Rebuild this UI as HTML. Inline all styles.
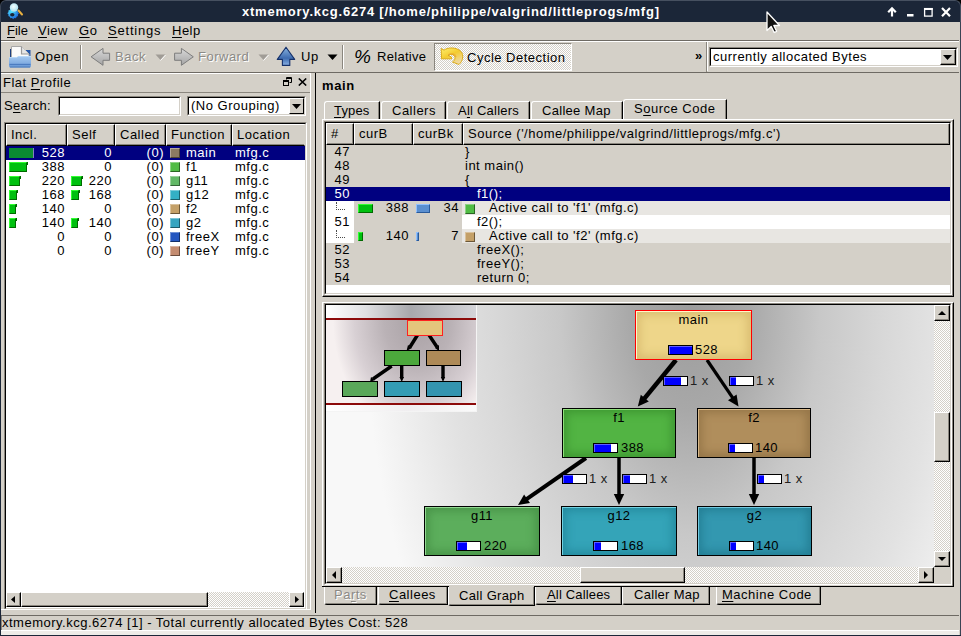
<!DOCTYPE html>
<html><head><meta charset="utf-8">
<style>
*{box-sizing:border-box}
html,body{margin:0;padding:0}
body{width:961px;height:636px;overflow:hidden;position:relative;background:#d4d0c8;font-family:"Liberation Sans",sans-serif;font-size:13px;letter-spacing:0.5px;color:#000}
.a{position:absolute}
.t{position:absolute;white-space:pre;line-height:14px}
.u{text-decoration:underline;text-underline-offset:2px}
.hl{position:absolute;height:1px}
.vl{position:absolute;width:1px}
</style></head><body>

<!-- ===== TITLE BAR ===== -->
<div class="a" style="left:0;top:0;width:961px;height:8px;background:#000"></div>
<div class="a" style="left:0;top:0;width:961px;height:22px;background:#1b2638;border-radius:6px 6px 0 0;border-top:1px solid #465060;border-left:1px solid #3a4454;border-right:1px solid #465060"></div>
<div class="t" style="left:242px;top:3px;color:#fff;font-weight:bold;font-size:13px;letter-spacing:0.78px;line-height:18px">xtmemory.kcg.6274 [/home/philippe/valgrind/littleprogs/mfg]</div>

<svg class="a" style="left:4px;top:1px" width="20" height="20" viewBox="0 0 20 20">
 <defs><radialGradient id="gear" cx="0.35" cy="0.35" r="0.75"><stop offset="0" stop-color="#50e8ff"/><stop offset="1" stop-color="#1458d8"/></radialGradient>
 <radialGradient id="lens" cx="0.45" cy="0.4" r="0.6"><stop offset="0" stop-color="#f4ffff"/><stop offset="1" stop-color="#a8e0f0"/></radialGradient></defs>
 <g transform="translate(0.3 2.2)">
 <path d="M7.7 5.5 l1.2 -1.2 1.2 1.2 1.6 -.3 .6 1.5 1.5 .6 -.2 1.6 1.2 1.2 -1.2 1.2 .2 1.6 -1.5 .6 -.6 1.5 -1.6 -.2 -1.2 1.2 -1.2 -1.2 -1.6 .2 -.6 -1.5 -1.5 -.6 .2 -1.6 -1.2 -1.2 1.2 -1.2 -.2 -1.6 1.5 -.6 .6 -1.5 z" fill="url(#gear)"/>
 <ellipse cx="8" cy="11.5" rx="2.2" ry="1.8" fill="#1b2638"/>
 </g>
 <path d="M14.5 9.5 L18 13.5" stroke="#e8b040" stroke-width="2" stroke-linecap="round"/>
 <circle cx="10" cy="6.5" r="4.2" fill="url(#lens)"/>
</svg>
<svg class="a" style="left:885px;top:5px" width="70" height="14" viewBox="0 0 70 14">
 <path d="M7 11.5 V4" stroke="#fff" stroke-width="2.2"/>
 <path d="M3.2 7.3 L7 3.3 L10.8 7.3" stroke="#fff" stroke-width="2.2" fill="none" stroke-linejoin="miter"/>
 <rect x="22" y="9" width="6.5" height="2.5" fill="#fff"/>
 <rect x="39.6" y="3.6" width="7.5" height="7.5" fill="none" stroke="#fff" stroke-width="1.3"/>
 <rect x="39" y="3" width="8.7" height="2" fill="#fff"/>
 <path d="M57 3 L65 11.2 M65 3 L57 11.2" stroke="#fff" stroke-width="2.2"/>
</svg>
<!-- frame borders -->
<div class="a" style="left:0;top:22px;width:1px;height:614px;background:#1b2638"></div>
<div class="a" style="left:960px;top:22px;width:1px;height:614px;background:#3a4454"></div>
<div class="a" style="left:0;top:635px;width:961px;height:1px;background:#1b2638"></div>

<!-- ===== MENU BAR ===== -->
<div class="t" style="left:7px;top:24px;letter-spacing:0"><span class="u">F</span>ile</div>
<div class="t" style="left:38px;top:24px"><span class="u">V</span>iew</div>
<div class="t" style="left:79px;top:24px"><span class="u">G</span>o</div>
<div class="t" style="left:108px;top:24px;letter-spacing:0.8px"><span class="u">S</span>ettings</div>
<div class="t" style="left:172px;top:24px"><span class="u">H</span>elp</div>
<div class="hl" style="left:1px;top:40px;width:958px;background:#6e6a64"></div>
<div class="hl" style="left:1px;top:41px;width:958px;background:#fff"></div>

<!-- ===== TOOLBAR ===== -->

<!-- Open icon -->
<svg class="a" style="left:8px;top:45px" width="24" height="23" viewBox="0 0 24 23">
 <defs><linearGradient id="gf" x1="0" y1="0" x2="0" y2="1"><stop offset="0" stop-color="#a4c8f0"/><stop offset="1" stop-color="#6c9cd8"/></linearGradient></defs>
 <path d="M2 4 H6 V12 H2 Z" fill="#1c3f80"/>
 <path d="M17 5 L22.5 5 V12 H17 Z" fill="#2858a8"/>
 <path d="M3.5 1.5 H13.5 L21 9 V12.5 H3.5 Z" fill="#fbfbfb" stroke="#a8a8a8" stroke-width="1"/>
 <path d="M13.5 1.5 V9 H21" fill="#e6e6e6" stroke="#9a9a9a" stroke-width="1.2"/>
 <path d="M1 12.5 H9 L10 11.5 H23 V21 Q23 22.5 21.5 22.5 H2.5 Q1 22.5 1 21 Z" fill="url(#gf)"/>
 <path d="M1 12.5 H9 L10 11.5 H23" stroke="#b8d8f8" stroke-width="1" fill="none"/>
 <path d="M1.5 19.5 H22.5" stroke="#4c7cc0" stroke-width="1.3"/>
 <path d="M2 22 H22" stroke="#4a78b8" stroke-width="1"/>
</svg>
<div class="t" style="left:35px;top:50px;letter-spacing:0.6px">Open</div>
<div class="vl" style="left:80px;top:45px;height:24px;background:#8a867e"></div>
<div class="vl" style="left:81px;top:45px;height:24px;background:#fff"></div>
<!-- Back -->
<svg class="a" style="left:90px;top:47px" width="21" height="19" viewBox="0 0 21 19">
 <defs><linearGradient id="gb" x1="0" y1="0" x2="0" y2="1"><stop offset="0" stop-color="#d8d8d8"/><stop offset="1" stop-color="#a4a4a4"/></linearGradient></defs>
 <path d="M1.1 9.8 L13 1.4 V6.2 H19.6 V13.3 H13 V18.3 Z" fill="url(#gb)" stroke="#7c7c7c" stroke-width="1" stroke-linejoin="round"/>
</svg>
<div class="t" style="left:115px;top:50px;color:#8c8a86;text-shadow:1px 1px 0 #fff">Back</div>
<svg class="a" style="left:155px;top:54px" width="11" height="7"><path d="M0.5 0.5 H10.5 L5.5 6 Z" fill="#a09c96"/><path d="M10.5 1 L5.5 6.5" stroke="#fff" stroke-width="1"/></svg>
<!-- Forward -->
<svg class="a" style="left:173px;top:47px" width="21" height="19" viewBox="0 0 21 19">
 <path d="M20.3 9.8 L8.4 1.4 V6.2 H1.6 V13.3 H8.4 V18.3 Z" fill="url(#gb)" stroke="#7c7c7c" stroke-width="1" stroke-linejoin="round"/>
</svg>
<div class="t" style="left:198px;top:50px;color:#8c8a86;text-shadow:1px 1px 0 #fff">Forward</div>
<svg class="a" style="left:258px;top:54px" width="11" height="7"><path d="M0.5 0.5 H10.5 L5.5 6 Z" fill="#a09c96"/><path d="M10.5 1 L5.5 6.5" stroke="#fff" stroke-width="1"/></svg>
<!-- Up -->
<svg class="a" style="left:276px;top:46px" width="20" height="21" viewBox="0 0 20 21">
 <defs><linearGradient id="gu" x1="0" y1="0" x2="0" y2="1"><stop offset="0" stop-color="#8ab4e0"/><stop offset="0.6" stop-color="#3e6cb0"/><stop offset="1" stop-color="#88b0e4"/></linearGradient></defs>
 <path d="M10 1.2 L18.7 13.4 H13.8 V19.4 H6.4 V13.4 H1.3 Z" fill="url(#gu)" stroke="#14306a" stroke-width="1.1" stroke-linejoin="round"/>
</svg>
<div class="t" style="left:301px;top:50px">Up</div>
<svg class="a" style="left:327px;top:54px" width="11" height="7"><path d="M0.5 0.5 H10.5 L5.5 6 Z" fill="#000"/></svg>
<div class="vl" style="left:342px;top:45px;height:24px;background:#8a867e"></div>
<div class="vl" style="left:343px;top:45px;height:24px;background:#fff"></div>
<!-- Relative -->
<div class="t" style="left:354px;top:47px;font-size:19px;line-height:20px;font-style:italic;letter-spacing:0">%</div>
<div class="t" style="left:377px;top:50px;letter-spacing:0.29px">Relative</div>
<!-- Cycle detection pressed -->
<div class="a" style="left:434px;top:43px;width:138px;height:28px;border:1px solid;border-color:#8a867e #fff #fff #8a867e;background-color:#eceae6;background-image:repeating-conic-gradient(#d4d0c8 0 25%, #ffffff 0 50%);background-size:2px 2px"></div>
<svg class="a" style="left:436px;top:42px" width="32" height="28" viewBox="0 0 32 28">
 <defs><linearGradient id="gy" x1="0" y1="0" x2="0.6" y2="1"><stop offset="0" stop-color="#fff070"/><stop offset="0.5" stop-color="#f4cc30"/><stop offset="1" stop-color="#f0d8a0"/></linearGradient></defs>
 <path d="M5.2 6.5 L8 8.2 C11 5.5 20 4.5 25 9.5 C28 13 27 19 23 22.5 L16.5 20 C19.5 18 20 14.5 17 12.8 C15.5 12 13.5 12.5 12 13.3 L15.5 15 V16.8 H5.5 Z" fill="url(#gy)" stroke="#dcac18" stroke-width="1" stroke-linejoin="round"/>
 <path d="M12.5 12.8 C15 11 19 11.5 20 15" stroke="#e8a030" stroke-width="1.2" fill="none" opacity="0.7"/>
</svg>
<div class="t" style="left:467px;top:51px">Cycle Detection</div>
<!-- chevrons + combo -->
<div class="t" style="left:695px;top:49px;font-weight:bold;letter-spacing:-1px">»</div>
<div class="vl" style="left:706px;top:42px;height:30px;background:#8a867e"></div>
<div class="vl" style="left:707px;top:42px;height:29px;background:#fff"></div>
<div class="a" style="left:709px;top:47px;width:249px;height:20px;border:1px solid;border-color:#8a867e #fff #fff #8a867e;background:#fff"></div>
<div class="a" style="left:710px;top:48px;width:247px;height:18px;border-top:1px solid #000;border-left:1px solid #000;border-right:1px solid #d4d0c8;border-bottom:1px solid #d4d0c8"></div>
<div class="t" style="left:713px;top:50px">currently allocated Bytes</div>
<div class="a" style="left:940px;top:49px;width:16px;height:16px;background:#d4d0c8;border:1px solid;border-color:#fff #000 #000 #fff;box-shadow:inset -1px -1px 0 #8a867e"></div>
<svg class="a" style="left:943px;top:55px" width="9" height="5"><path d="M0 0 H9 L4.5 5 Z" fill="#000"/></svg>

<div class="hl" style="left:1px;top:72px;width:958px;background:#6e6a64"></div>

<!-- ===== LEFT DOCK ===== -->
<div class="hl" style="left:1px;top:73px;width:310px;background:#fff"></div>
<div class="vl" style="left:310px;top:73px;height:537px;background:#fff"></div>
<div class="t" style="left:3px;top:76px">Flat <span class="u">P</span>rofile</div>
<svg class="a" style="left:283px;top:77px" width="9" height="9" viewBox="0 0 9 9"><path d="M3.5 0.5 H8.5 V5.5 H6.5 M3.5 2.5 V0.5" fill="none" stroke="#000"/><path d="M3.5 1.5 H8.5" stroke="#000"/><rect x="0.5" y="3.5" width="5" height="5" fill="none" stroke="#000"/><path d="M0.5 4.5 H5.5" stroke="#000"/></svg>
<svg class="a" style="left:298px;top:78px" width="9" height="8" viewBox="0 0 9 8"><path d="M0.8 0.5 L8.2 7.5 M8.2 0.5 L0.8 7.5" stroke="#000" stroke-width="1.6"/></svg>
<div class="hl" style="left:1px;top:92px;width:309px;background:#8a867e"></div>
<div class="t" style="left:4px;top:99px;letter-spacing:0.3px">S<span class="u">e</span>arch:</div>
<div class="a" style="left:58px;top:96px;width:123px;height:20px;border:1px solid;border-color:#8a867e #fff #fff #8a867e;background:#fff"><div style="position:absolute;left:0;top:0;right:0;bottom:0;border:1px solid;border-color:#000 #d4d0c8 #d4d0c8 #000"></div></div>
<div class="a" style="left:187px;top:96px;width:119px;height:20px;border:1px solid;border-color:#8a867e #fff #fff #8a867e;background:#fff"><div style="position:absolute;left:0;top:0;right:0;bottom:0;border:1px solid;border-color:#000 #d4d0c8 #d4d0c8 #000"></div></div>
<div class="t" style="left:191px;top:99px">(No Grouping)</div>
<div class="a" style="left:289px;top:98px;width:15px;height:16px;background:#d4d0c8;border:1px solid;border-color:#fff #000 #000 #fff"></div>
<svg class="a" style="left:292px;top:104px" width="9" height="5"><path d="M0 0 H9 L4.5 5 Z" fill="#000"/></svg>
<div class="a" style="left:4px;top:122px;width:303px;height:488px;border:1px solid;border-color:#8a867e #fff #fff #8a867e"></div>
<div class="a" style="left:5px;top:123px;width:301px;height:486px;border:1px solid;border-color:#000 #d4d0c8 #d4d0c8 #000;background:#fff"></div>
<div class="a" style="left:6px;top:124px;width:61px;height:22px;background:#d4d0c8;border:1px solid;border-color:#fff #000 #000 #fff;box-shadow:inset -1px -1px 0 #8a867e"></div>
<div class="t" style="left:11px;top:128px">Incl.</div>
<div class="a" style="left:67px;top:124px;width:48px;height:22px;background:#d4d0c8;border:1px solid;border-color:#fff #000 #000 #fff;box-shadow:inset -1px -1px 0 #8a867e"></div>
<div class="t" style="left:72px;top:128px">Self</div>
<div class="a" style="left:115px;top:124px;width:51px;height:22px;background:#d4d0c8;border:1px solid;border-color:#fff #000 #000 #fff;box-shadow:inset -1px -1px 0 #8a867e"></div>
<div class="t" style="left:120px;top:128px">Called</div>
<div class="a" style="left:166px;top:124px;width:66px;height:22px;background:#d4d0c8;border:1px solid;border-color:#fff #000 #000 #fff;box-shadow:inset -1px -1px 0 #8a867e"></div>
<div class="t" style="left:171px;top:128px">Function</div>
<div class="a" style="left:232px;top:124px;width:73px;height:22px;background:#d4d0c8;border:1px solid;border-color:#fff #d4d0c8 #000 #fff;box-shadow:inset 0 -1px 0 #8a867e"></div>
<div class="t" style="left:237px;top:128px">Location</div>
<div class="a" style="left:6px;top:146px;width:299px;height:14px;background:#000080"></div>
<div class="a" style="left:9px;top:148px;width:25px;height:10px;background:#0a8a32;border-right:1px solid #8080c0"></div>
<div class="t" style="left:6px;top:146px;width:59px;text-align:right;color:#fff">528</div>
<div class="t" style="left:67px;top:146px;width:45px;text-align:right;color:#fff">0</div>
<div class="t" style="left:115px;top:146px;width:49px;text-align:right;color:#fff">(0)</div>
<div class="a" style="left:170px;top:148px;width:10px;height:10px;background:#8b7b62;border:1px solid;border-color:rgba(255,255,255,.35) rgba(0,0,0,.45) rgba(0,0,0,.45) rgba(255,255,255,.35)"></div>
<div class="t" style="left:186px;top:146px;color:#fff">main</div>
<div class="t" style="left:235px;top:146px;color:#fff">mfg.c</div>
<div class="a" style="left:9px;top:162px;width:18px;height:10px;background:#00c010;border:1px solid;border-color:#30ff30 #006a00 #006a00 #30ff30"></div><div class="a" style="left:27px;top:162px;width:1px;height:3px;background:#006a00"></div>
<div class="t" style="left:6px;top:160px;width:59px;text-align:right;color:#000">388</div>
<div class="t" style="left:67px;top:160px;width:45px;text-align:right;color:#000">0</div>
<div class="t" style="left:115px;top:160px;width:49px;text-align:right;color:#000">(0)</div>
<div class="a" style="left:170px;top:162px;width:10px;height:10px;background:#50bc44;border:1px solid;border-color:rgba(255,255,255,.35) rgba(0,0,0,.45) rgba(0,0,0,.45) rgba(255,255,255,.35)"></div>
<div class="t" style="left:186px;top:160px;color:#000">f1</div>
<div class="t" style="left:235px;top:160px;color:#000">mfg.c</div>
<div class="a" style="left:9px;top:176px;width:11px;height:10px;background:#00c010;border:1px solid;border-color:#30ff30 #006a00 #006a00 #30ff30"></div><div class="a" style="left:20px;top:176px;width:1px;height:3px;background:#006a00"></div>
<div class="a" style="left:71px;top:176px;width:11px;height:10px;background:#00c010;border:1px solid;border-color:#30ff30 #006a00 #006a00 #30ff30"></div><div class="a" style="left:82px;top:176px;width:1px;height:3px;background:#006a00"></div>
<div class="t" style="left:6px;top:174px;width:59px;text-align:right;color:#000">220</div>
<div class="t" style="left:67px;top:174px;width:45px;text-align:right;color:#000">220</div>
<div class="t" style="left:115px;top:174px;width:49px;text-align:right;color:#000">(0)</div>
<div class="a" style="left:170px;top:176px;width:10px;height:10px;background:#62b866;border:1px solid;border-color:rgba(255,255,255,.35) rgba(0,0,0,.45) rgba(0,0,0,.45) rgba(255,255,255,.35)"></div>
<div class="t" style="left:186px;top:174px;color:#000">g11</div>
<div class="t" style="left:235px;top:174px;color:#000">mfg.c</div>
<div class="a" style="left:9px;top:190px;width:8px;height:10px;background:#00c010;border:1px solid;border-color:#30ff30 #006a00 #006a00 #30ff30"></div><div class="a" style="left:17px;top:190px;width:1px;height:3px;background:#006a00"></div>
<div class="a" style="left:71px;top:190px;width:8px;height:10px;background:#00c010;border:1px solid;border-color:#30ff30 #006a00 #006a00 #30ff30"></div><div class="a" style="left:79px;top:190px;width:1px;height:3px;background:#006a00"></div>
<div class="t" style="left:6px;top:188px;width:59px;text-align:right;color:#000">168</div>
<div class="t" style="left:67px;top:188px;width:45px;text-align:right;color:#000">168</div>
<div class="t" style="left:115px;top:188px;width:49px;text-align:right;color:#000">(0)</div>
<div class="a" style="left:170px;top:190px;width:10px;height:10px;background:#34b0c4;border:1px solid;border-color:rgba(255,255,255,.35) rgba(0,0,0,.45) rgba(0,0,0,.45) rgba(255,255,255,.35)"></div>
<div class="t" style="left:186px;top:188px;color:#000">g12</div>
<div class="t" style="left:235px;top:188px;color:#000">mfg.c</div>
<div class="a" style="left:9px;top:204px;width:7px;height:10px;background:#00c010;border:1px solid;border-color:#30ff30 #006a00 #006a00 #30ff30"></div><div class="a" style="left:16px;top:204px;width:1px;height:3px;background:#006a00"></div>
<div class="t" style="left:6px;top:202px;width:59px;text-align:right;color:#000">140</div>
<div class="t" style="left:67px;top:202px;width:45px;text-align:right;color:#000">0</div>
<div class="t" style="left:115px;top:202px;width:49px;text-align:right;color:#000">(0)</div>
<div class="a" style="left:170px;top:204px;width:10px;height:10px;background:#c4a068;border:1px solid;border-color:rgba(255,255,255,.35) rgba(0,0,0,.45) rgba(0,0,0,.45) rgba(255,255,255,.35)"></div>
<div class="t" style="left:186px;top:202px;color:#000">f2</div>
<div class="t" style="left:235px;top:202px;color:#000">mfg.c</div>
<div class="a" style="left:9px;top:218px;width:7px;height:10px;background:#00c010;border:1px solid;border-color:#30ff30 #006a00 #006a00 #30ff30"></div><div class="a" style="left:16px;top:218px;width:1px;height:3px;background:#006a00"></div>
<div class="a" style="left:71px;top:218px;width:7px;height:10px;background:#00c010;border:1px solid;border-color:#30ff30 #006a00 #006a00 #30ff30"></div><div class="a" style="left:78px;top:218px;width:1px;height:3px;background:#006a00"></div>
<div class="t" style="left:6px;top:216px;width:59px;text-align:right;color:#000">140</div>
<div class="t" style="left:67px;top:216px;width:45px;text-align:right;color:#000">140</div>
<div class="t" style="left:115px;top:216px;width:49px;text-align:right;color:#000">(0)</div>
<div class="a" style="left:170px;top:218px;width:10px;height:10px;background:#36a4c0;border:1px solid;border-color:rgba(255,255,255,.35) rgba(0,0,0,.45) rgba(0,0,0,.45) rgba(255,255,255,.35)"></div>
<div class="t" style="left:186px;top:216px;color:#000">g2</div>
<div class="t" style="left:235px;top:216px;color:#000">mfg.c</div>
<div class="t" style="left:6px;top:230px;width:59px;text-align:right;color:#000">0</div>
<div class="t" style="left:67px;top:230px;width:45px;text-align:right;color:#000">0</div>
<div class="t" style="left:115px;top:230px;width:49px;text-align:right;color:#000">(0)</div>
<div class="a" style="left:170px;top:232px;width:10px;height:10px;background:#2456c0;border:1px solid;border-color:rgba(255,255,255,.35) rgba(0,0,0,.45) rgba(0,0,0,.45) rgba(255,255,255,.35)"></div>
<div class="t" style="left:186px;top:230px;color:#000">freeX</div>
<div class="t" style="left:235px;top:230px;color:#000">mfg.c</div>
<div class="t" style="left:6px;top:244px;width:59px;text-align:right;color:#000">0</div>
<div class="t" style="left:67px;top:244px;width:45px;text-align:right;color:#000">0</div>
<div class="t" style="left:115px;top:244px;width:49px;text-align:right;color:#000">(0)</div>
<div class="a" style="left:170px;top:246px;width:10px;height:10px;background:#c48c70;border:1px solid;border-color:rgba(255,255,255,.35) rgba(0,0,0,.45) rgba(0,0,0,.45) rgba(255,255,255,.35)"></div>
<div class="t" style="left:186px;top:244px;color:#000">freeY</div>
<div class="t" style="left:235px;top:244px;color:#000">mfg.c</div>
<div class="a" style="left:6px;top:592px;width:298px;height:15px;background-color:#eae8e4;background-image:repeating-conic-gradient(#d4d0c8 0 25%, #ffffff 0 50%);background-size:2px 2px"></div>
<div class="a" style="left:6px;top:592px;width:15px;height:15px;background:#d4d0c8;border:1px solid;border-color:#fff #000 #000 #fff;box-shadow:inset -1px -1px 0 #8a867e"></div>
<svg class="a" style="left:11px;top:596px" width="4" height="7"><path d="M4 0 V7 L0 3.5 Z" fill="#000"/></svg>
<div class="a" style="left:21px;top:592px;width:187px;height:15px;background:#d4d0c8;border:1px solid;border-color:#fff #000 #000 #fff;box-shadow:inset -1px -1px 0 #8a867e"></div>
<div class="a" style="left:289px;top:592px;width:15px;height:15px;background:#d4d0c8;border:1px solid;border-color:#fff #000 #000 #fff;box-shadow:inset -1px -1px 0 #8a867e"></div>
<svg class="a" style="left:295px;top:596px" width="4" height="7"><path d="M0 0 V7 L4 3.5 Z" fill="#000"/></svg>
<div class="hl" style="left:1px;top:609px;width:310px;background:#fff"></div>
<div class="vl" style="left:315px;top:73px;height:540px;background:#000"></div>

<!-- ===== RIGHT PANEL ===== -->
<div class="t" style="left:322px;top:79px;font-weight:bold;letter-spacing:0.6px">main</div>
<div class="a" style="left:324px;top:101px;width:56px;height:19px;background:#d4d0c8;border-left:1px solid #fff;border-top:1px solid #fff;border-right:1px solid #000;border-top-left-radius:3px;box-shadow:inset -1px 0 0 #8a867e"></div>
<div class="a" style="left:381px;top:101px;width:65px;height:19px;background:#d4d0c8;border-left:1px solid #fff;border-top:1px solid #fff;border-right:1px solid #000;border-top-left-radius:3px;box-shadow:inset -1px 0 0 #8a867e"></div>
<div class="a" style="left:447px;top:101px;width:83px;height:19px;background:#d4d0c8;border-left:1px solid #fff;border-top:1px solid #fff;border-right:1px solid #000;border-top-left-radius:3px;box-shadow:inset -1px 0 0 #8a867e"></div>
<div class="a" style="left:531px;top:101px;width:92px;height:19px;background:#d4d0c8;border-left:1px solid #fff;border-top:1px solid #fff;border-right:1px solid #000;border-top-left-radius:3px;box-shadow:inset -1px 0 0 #8a867e"></div>
<div class="a" style="left:623px;top:99px;width:104px;height:21px;background:#d4d0c8;border-left:1px solid #fff;border-top:1px solid #fff;border-right:1px solid #000;border-top-left-radius:3px;box-shadow:inset -1px 0 0 #8a867e"></div>
<div class="t" style="left:334px;top:104px;letter-spacing:0.15px"><span class="u">T</span>ypes</div>
<div class="t" style="left:392px;top:104px">Callers</div>
<div class="t" style="left:458px;top:104px;letter-spacing:0.23px">A<span class="u">l</span>l Callers</div>
<div class="t" style="left:542px;top:104px;letter-spacing:0.3px">Callee Map</div>
<div class="t" style="left:634px;top:102px">S<span class="u">o</span>urce Code</div>
<div class="a" style="left:322px;top:119px;width:632px;height:178px;border-left:1px solid #fff;border-top:1px solid #fff;border-right:1px solid #000;border-bottom:1px solid #000;box-shadow:inset -1px -1px 0 #8a867e"></div>
<div class="a" style="left:324px;top:121px;width:628px;height:174px;border:1px solid;border-color:#8a867e #fff #fff #8a867e;background:#fff"></div>
<div class="a" style="left:325px;top:122px;width:626px;height:172px;border:1px solid;border-color:#000 #d4d0c8 #d4d0c8 #000"></div>
<div class="a" style="left:326px;top:123px;width:28px;height:22px;background:#d4d0c8;border:1px solid;border-color:#fff #000 #000 #fff;box-shadow:inset -1px -1px 0 #8a867e"></div>
<div class="t" style="left:331px;top:127px">#</div>
<div class="a" style="left:354px;top:123px;width:59px;height:22px;background:#d4d0c8;border:1px solid;border-color:#fff #000 #000 #fff;box-shadow:inset -1px -1px 0 #8a867e"></div>
<div class="t" style="left:359px;top:127px">curB</div>
<div class="a" style="left:413px;top:123px;width:50px;height:22px;background:#d4d0c8;border:1px solid;border-color:#fff #000 #000 #fff;box-shadow:inset -1px -1px 0 #8a867e"></div>
<div class="t" style="left:418px;top:127px">curBk</div>
<div class="a" style="left:463px;top:123px;width:487px;height:22px;background:#d4d0c8;border:1px solid;border-color:#fff #000 #000 #fff;box-shadow:inset -1px -1px 0 #8a867e"></div>
<div class="t" style="left:468px;top:127px">Source ('/home/philippe/valgrind/littleprogs/mfg.c')</div>
<div class="a" style="left:326px;top:145px;width:624px;height:14px;background:#d4d0c8"></div>
<div class="t" style="left:326px;top:145px;width:24px;text-align:right;color:#000">47</div>
<div class="t" style="left:465px;top:145px;color:#000">}</div>
<div class="a" style="left:326px;top:159px;width:624px;height:14px;background:#d4d0c8"></div>
<div class="t" style="left:326px;top:159px;width:24px;text-align:right;color:#000">48</div>
<div class="t" style="left:465px;top:159px;color:#000">int main()</div>
<div class="a" style="left:326px;top:173px;width:624px;height:14px;background:#d4d0c8"></div>
<div class="t" style="left:326px;top:173px;width:24px;text-align:right;color:#000">49</div>
<div class="t" style="left:465px;top:173px;color:#000">{</div>
<div class="a" style="left:326px;top:187px;width:624px;height:14px;background:#000080"></div>
<div class="t" style="left:326px;top:187px;width:24px;text-align:right;color:#fff">50</div>
<div class="t" style="left:477px;top:187px;color:#fff">f1();</div>
<div class="a" style="left:326px;top:201px;width:28px;height:14px;background:#fff"></div>
<div class="a" style="left:354px;top:201px;width:108px;height:14px;background:#d4d0c8"></div>
<div class="a" style="left:462px;top:201px;width:488px;height:14px;background:#e8e6e2"></div>
<div class="a" style="left:336px;top:202px;width:9px;height:8px;border-left:1px dotted #000;border-bottom:1px dotted #000;opacity:.7"></div>
<div class="a" style="left:326px;top:215px;width:28px;height:14px;background:#fff"></div>
<div class="a" style="left:354px;top:215px;width:108px;height:14px;background:#d4d0c8"></div>
<div class="a" style="left:462px;top:215px;width:488px;height:14px;background:#fff"></div>
<div class="t" style="left:326px;top:215px;width:24px;text-align:right;color:#000">51</div>
<div class="t" style="left:477px;top:215px;color:#000">f2();</div>
<div class="a" style="left:326px;top:229px;width:28px;height:14px;background:#fff"></div>
<div class="a" style="left:354px;top:229px;width:108px;height:14px;background:#d4d0c8"></div>
<div class="a" style="left:462px;top:229px;width:488px;height:14px;background:#e8e6e2"></div>
<div class="a" style="left:336px;top:230px;width:9px;height:8px;border-left:1px dotted #000;border-bottom:1px dotted #000;opacity:.7"></div>
<div class="a" style="left:326px;top:243px;width:624px;height:14px;background:#d4d0c8"></div>
<div class="t" style="left:326px;top:243px;width:24px;text-align:right;color:#000">52</div>
<div class="t" style="left:477px;top:243px;color:#000">freeX();</div>
<div class="a" style="left:326px;top:257px;width:624px;height:14px;background:#d4d0c8"></div>
<div class="t" style="left:326px;top:257px;width:24px;text-align:right;color:#000">53</div>
<div class="t" style="left:477px;top:257px;color:#000">freeY();</div>
<div class="a" style="left:326px;top:271px;width:624px;height:14px;background:#d4d0c8"></div>
<div class="t" style="left:326px;top:271px;width:24px;text-align:right;color:#000">54</div>
<div class="t" style="left:477px;top:271px;color:#000">return 0;</div>
<div class="a" style="left:358px;top:204px;width:15px;height:9px;background:#00c010;border:1px solid;border-color:#30ff30 #006a00 #006a00 #30ff30"></div>
<div class="t" style="left:354px;top:201px;width:55px;text-align:right">388</div>
<div class="a" style="left:416px;top:204px;width:14px;height:9px;background:#5a8fd0;border:1px solid;border-color:#90c0ff #2a5a9a #2a5a9a #90c0ff"></div>
<div class="t" style="left:413px;top:201px;width:46px;text-align:right">34</div>
<div class="a" style="left:465px;top:204px;width:10px;height:10px;background:#50bc44;border:1px solid;border-color:rgba(255,255,255,.35) rgba(0,0,0,.45) rgba(0,0,0,.45) rgba(255,255,255,.35)"></div>
<div class="t" style="left:489px;top:201px">Active call to 'f1' (mfg.c)</div>
<div class="a" style="left:358px;top:232px;width:5px;height:9px;background:#00c010;border:1px solid;border-color:#30ff30 #006a00 #006a00 #30ff30"></div>
<div class="t" style="left:354px;top:229px;width:55px;text-align:right">140</div>
<div class="a" style="left:416px;top:232px;width:3px;height:9px;background:#5a8fd0;border:1px solid;border-color:#90c0ff #2a5a9a #2a5a9a #90c0ff"></div>
<div class="t" style="left:413px;top:229px;width:46px;text-align:right">7</div>
<div class="a" style="left:465px;top:232px;width:10px;height:10px;background:#c4a068;border:1px solid;border-color:rgba(255,255,255,.35) rgba(0,0,0,.45) rgba(0,0,0,.45) rgba(255,255,255,.35)"></div>
<div class="t" style="left:489px;top:229px">Active call to 'f2' (mfg.c)</div>
<div class="a" style="left:322px;top:302px;width:632px;height:285px;border-left:1px solid #fff;border-top:1px solid #fff;border-right:1px solid #000;border-bottom:1px solid #000;box-shadow:inset -1px 0 0 #8a867e"></div>
<div class="a" style="left:324px;top:303px;width:628px;height:282px;border:1px solid;border-color:#8a867e #fff #fff #8a867e"></div>
<div class="a" style="left:325px;top:304px;width:626px;height:280px;border:1px solid;border-color:#000 #d4d0c8 #d4d0c8 #000"></div>
<div class="a" id="vp" style="left:326px;top:305px;width:608px;height:262px;overflow:hidden;background:radial-gradient(ellipse 325px 560px at 364px 5px, #9c9c9c 0%, #a8a8a8 18%, #c8c8c8 40%, #d8d8d8 60%, #e2e2e2 75%, #f8f8f8 100%)"></div>
<svg class="a" style="left:0;top:0" width="961" height="636" viewBox="0 0 961 636">
<defs><clipPath id="vpc"><rect x="326" y="305" width="608" height="262"/></clipPath></defs>
<g clip-path="url(#vpc)">
<line x1="676" y1="360" x2="644.1" y2="398.9" stroke="#000" stroke-width="4.5"/><path d="M637.8 406.6 L640.8 394.8 L648.8 401.4 Z" fill="#000"/>
<line x1="707" y1="360" x2="732.9" y2="398.2" stroke="#000" stroke-width="3.2"/><path d="M738.5 406.5 L728.0 400.3 L736.6 394.5 Z" fill="#000"/>
<line x1="586" y1="458" x2="526.2" y2="499.3" stroke="#000" stroke-width="4"/><path d="M518 505 L524.1 494.5 L530.0 503.0 Z" fill="#000"/>
<line x1="619" y1="458" x2="619.0" y2="495.0" stroke="#000" stroke-width="3.5"/><path d="M619 505 L613.8 494.0 L624.2 494.0 Z" fill="#000"/>
<line x1="754" y1="458" x2="754.0" y2="495.0" stroke="#000" stroke-width="3.5"/><path d="M754 505 L748.8 494.0 L759.2 494.0 Z" fill="#000"/>
</g></svg>
<div class="a" style="left:635px;top:310px;width:117px;height:50px;background:#eed68a;border:1px solid #ff0000;box-shadow:inset 1px 1px 0 #fff6c8, inset 0 0 9px 4px rgba(200,165,90,0.5)"></div>
<div class="t" style="left:635px;top:313px;width:117px;text-align:center;letter-spacing:0.4px">main</div>
<div class="a" style="left:668px;top:345px;width:25px;height:10px;background:#fff;border:1px solid #000"><div style="position:absolute;left:0;top:0;width:23px;height:8px;background:#0000ff;box-shadow:inset 1px 1px 0 #6060ff"></div></div>
<div class="t" style="left:695px;top:343px;letter-spacing:0.4px">528</div>
<div class="a" style="left:562px;top:408px;width:114px;height:50px;background:#52b443;border:1px solid #000;box-shadow:inset 1px 1px 0 #8ee07a, inset 0 0 9px 4px rgba(40,120,30,0.45)"></div>
<div class="t" style="left:562px;top:411px;width:114px;text-align:center;letter-spacing:0.4px">f1</div>
<div class="a" style="left:593px;top:443px;width:25px;height:10px;background:#fff;border:1px solid #000"><div style="position:absolute;left:0;top:0;width:17px;height:8px;background:#0000ff;box-shadow:inset 1px 1px 0 #6060ff"></div></div>
<div class="t" style="left:621px;top:441px;letter-spacing:0.4px">388</div>
<div class="a" style="left:697px;top:408px;width:114px;height:50px;background:#b08e5c;border:1px solid #000;box-shadow:inset 1px 1px 0 #d8b888, inset 0 0 9px 4px rgba(120,90,50,0.45)"></div>
<div class="t" style="left:697px;top:411px;width:114px;text-align:center;letter-spacing:0.4px">f2</div>
<div class="a" style="left:728px;top:443px;width:25px;height:10px;background:#fff;border:1px solid #000"><div style="position:absolute;left:0;top:0;width:6px;height:8px;background:#0000ff;box-shadow:inset 1px 1px 0 #6060ff"></div></div>
<div class="t" style="left:755px;top:441px;letter-spacing:0.4px">140</div>
<div class="a" style="left:424px;top:506px;width:116px;height:50px;background:#5cae5c;border:1px solid #000;box-shadow:inset 1px 1px 0 #90d890, inset 0 0 9px 4px rgba(50,120,50,0.45)"></div>
<div class="t" style="left:424px;top:509px;width:116px;text-align:center;letter-spacing:0.4px">g11</div>
<div class="a" style="left:456px;top:541px;width:25px;height:10px;background:#fff;border:1px solid #000"><div style="position:absolute;left:0;top:0;width:10px;height:8px;background:#0000ff;box-shadow:inset 1px 1px 0 #6060ff"></div></div>
<div class="t" style="left:484px;top:539px;letter-spacing:0.4px">220</div>
<div class="a" style="left:561px;top:506px;width:116px;height:50px;background:#34a4b8;border:1px solid #000;box-shadow:inset 1px 1px 0 #70d0e0, inset 0 0 9px 4px rgba(20,110,130,0.45)"></div>
<div class="t" style="left:561px;top:509px;width:116px;text-align:center;letter-spacing:0.4px">g12</div>
<div class="a" style="left:593px;top:541px;width:25px;height:10px;background:#fff;border:1px solid #000"><div style="position:absolute;left:0;top:0;width:7px;height:8px;background:#0000ff;box-shadow:inset 1px 1px 0 #6060ff"></div></div>
<div class="t" style="left:621px;top:539px;letter-spacing:0.4px">168</div>
<div class="a" style="left:697px;top:506px;width:115px;height:50px;background:#3398b0;border:1px solid #000;box-shadow:inset 1px 1px 0 #70c8e0, inset 0 0 9px 4px rgba(20,100,120,0.45)"></div>
<div class="t" style="left:697px;top:509px;width:115px;text-align:center;letter-spacing:0.4px">g2</div>
<div class="a" style="left:729px;top:541px;width:25px;height:10px;background:#fff;border:1px solid #000"><div style="position:absolute;left:0;top:0;width:6px;height:8px;background:#0000ff;box-shadow:inset 1px 1px 0 #6060ff"></div></div>
<div class="t" style="left:756px;top:539px;letter-spacing:0.4px">140</div>
<div class="a" style="left:663px;top:376px;width:25px;height:10px;background:#fff;border:1px solid #000"><div style="position:absolute;left:0;top:0;width:17px;height:8px;background:#0000ff;box-shadow:inset 1px 1px 0 #6060ff"></div></div>
<div class="t" style="left:690px;top:374px;letter-spacing:0.5px;color:#202020">1 x</div>
<div class="a" style="left:729px;top:376px;width:25px;height:10px;background:#fff;border:1px solid #000"><div style="position:absolute;left:0;top:0;width:6px;height:8px;background:#0000ff;box-shadow:inset 1px 1px 0 #6060ff"></div></div>
<div class="t" style="left:756px;top:374px;letter-spacing:0.5px;color:#202020">1 x</div>
<div class="a" style="left:562px;top:474px;width:25px;height:10px;background:#fff;border:1px solid #000"><div style="position:absolute;left:0;top:0;width:10px;height:8px;background:#0000ff;box-shadow:inset 1px 1px 0 #6060ff"></div></div>
<div class="t" style="left:589px;top:472px;letter-spacing:0.5px;color:#202020">1 x</div>
<div class="a" style="left:622px;top:474px;width:25px;height:10px;background:#fff;border:1px solid #000"><div style="position:absolute;left:0;top:0;width:7px;height:8px;background:#0000ff;box-shadow:inset 1px 1px 0 #6060ff"></div></div>
<div class="t" style="left:649px;top:472px;letter-spacing:0.5px;color:#202020">1 x</div>
<div class="a" style="left:757px;top:474px;width:25px;height:10px;background:#fff;border:1px solid #000"><div style="position:absolute;left:0;top:0;width:6px;height:8px;background:#0000ff;box-shadow:inset 1px 1px 0 #6060ff"></div></div>
<div class="t" style="left:784px;top:472px;letter-spacing:0.5px;color:#202020">1 x</div>
<div class="a" style="left:326px;top:305px;width:151px;height:107px;background:radial-gradient(ellipse 85px 115px at 92px 15px,#a8a0a4 0%,#bab2b6 40%,#d8d0d4 75%,#f6f0f0 100%);border-right:1px solid #f4f4f4;border-bottom:1px solid #f4f4f4"></div>
<div class="a" style="left:326px;top:305px;width:150px;height:13px;background:linear-gradient(90deg,#ffffff 0,#e0e0e2 40px,#a8a8ac 85px,#c8c8cc 130px,#d4d4d8 150px)"></div>
<div class="a" style="left:326px;top:404px;width:150px;height:7px;background:linear-gradient(90deg,#ffffff 0,#f0eef0 80px,#fafafa 150px)"></div>
<div class="a" style="left:326px;top:318px;width:150px;height:2px;background:#8c0a0a"></div>
<div class="a" style="left:326px;top:403px;width:150px;height:2px;background:#8c0a0a"></div>
<svg class="a" style="left:0;top:0" width="961" height="636"><path d="M417.5 335 L410 347 M429 335 L437 347 M391.7 366 L373 379 M401.7 366 V378 M443 366 V378" stroke="#000" stroke-width="3.4"/><path d="M406.5 351 L408 345 L412 348 Z M439 351 L435 348 L439 345 Z M370 382 L371 377 L375 380 Z M399.5 377 H404 L401.7 382 Z M440.8 377 H445.2 L443 382 Z" fill="#000"/></svg>
<div class="a" style="left:407px;top:320px;width:36px;height:16px;background:#e4c47c;border:1px solid #ff2020"></div>
<div class="a" style="left:384px;top:350px;width:36px;height:16px;background:#4ca83c;border:1px solid #000"></div>
<div class="a" style="left:426px;top:350px;width:35px;height:16px;background:#ae8a58;border:1px solid #000"></div>
<div class="a" style="left:342px;top:381px;width:36px;height:16px;background:#5aa85a;border:1px solid #000"></div>
<div class="a" style="left:384px;top:381px;width:36px;height:16px;background:#349cb4;border:1px solid #000"></div>
<div class="a" style="left:426px;top:381px;width:36px;height:16px;background:#3494b0;border:1px solid #000"></div>
<div class="a" style="left:934px;top:305px;width:16px;height:262px;background-color:#eae8e4;background-image:repeating-conic-gradient(#d4d0c8 0 25%, #ffffff 0 50%);background-size:2px 2px"></div>
<div class="a" style="left:934px;top:305px;width:16px;height:16px;background:#d4d0c8;border:1px solid;border-color:#fff #000 #000 #fff;box-shadow:inset -1px -1px 0 #8a867e"></div>
<svg class="a" style="left:938px;top:311px" width="8" height="4"><path d="M0 4 H8 L4 0 Z" fill="#000"/></svg>
<div class="a" style="left:934px;top:412px;width:16px;height:50px;background:#d4d0c8;border:1px solid;border-color:#fff #000 #000 #fff;box-shadow:inset -1px -1px 0 #8a867e"></div>
<div class="a" style="left:934px;top:551px;width:16px;height:16px;background:#d4d0c8;border:1px solid;border-color:#fff #000 #000 #fff;box-shadow:inset -1px -1px 0 #8a867e"></div>
<svg class="a" style="left:938px;top:557px" width="8" height="4"><path d="M0 0 H8 L4 4 Z" fill="#000"/></svg>
<div class="a" style="left:326px;top:567px;width:608px;height:16px;background-color:#eae8e4;background-image:repeating-conic-gradient(#d4d0c8 0 25%, #ffffff 0 50%);background-size:2px 2px"></div>
<div class="a" style="left:326px;top:567px;width:16px;height:16px;background:#d4d0c8;border:1px solid;border-color:#fff #000 #000 #fff;box-shadow:inset -1px -1px 0 #8a867e"></div>
<svg class="a" style="left:332px;top:571px" width="4" height="8"><path d="M4 0 V8 L0 4 Z" fill="#000"/></svg>
<div class="a" style="left:580px;top:567px;width:105px;height:16px;background:#d4d0c8;border:1px solid;border-color:#fff #000 #000 #fff;box-shadow:inset -1px -1px 0 #8a867e"></div>
<div class="a" style="left:918px;top:567px;width:16px;height:16px;background:#d4d0c8;border:1px solid;border-color:#fff #000 #000 #fff;box-shadow:inset -1px -1px 0 #8a867e"></div>
<svg class="a" style="left:924px;top:571px" width="4" height="8"><path d="M0 0 V8 L4 4 Z" fill="#000"/></svg>
<div class="a" style="left:934px;top:567px;width:16px;height:16px;background:#d4d0c8"></div>
<div class="a" style="left:324px;top:586px;width:53px;height:19px;background:#d4d0c8;border-left:1px solid #fff;border-bottom:1px solid #000;border-right:1px solid #000;border-bottom-left-radius:3px;box-shadow:inset -1px -1px 0 #8a867e"></div>
<div class="a" style="left:378px;top:586px;width:70px;height:19px;background:#d4d0c8;border-left:1px solid #fff;border-bottom:1px solid #000;border-right:1px solid #000;border-bottom-left-radius:3px;box-shadow:inset -1px -1px 0 #8a867e"></div>
<div class="a" style="left:448px;top:586px;width:87px;height:20px;background:#d4d0c8;border-left:1px solid #fff;border-bottom:1px solid #000;border-right:1px solid #000;border-bottom-left-radius:3px;box-shadow:inset -1px -1px 0 #8a867e"></div>
<div class="a" style="left:535px;top:586px;width:87px;height:19px;background:#d4d0c8;border-left:1px solid #fff;border-bottom:1px solid #000;border-right:1px solid #000;border-bottom-left-radius:3px;box-shadow:inset -1px -1px 0 #8a867e"></div>
<div class="a" style="left:622px;top:586px;width:88px;height:19px;background:#d4d0c8;border-left:1px solid #fff;border-bottom:1px solid #000;border-right:1px solid #000;border-bottom-left-radius:3px;box-shadow:inset -1px -1px 0 #8a867e"></div>
<div class="a" style="left:716px;top:586px;width:105px;height:19px;background:#d4d0c8;border-left:1px solid #fff;border-bottom:1px solid #000;border-right:1px solid #000;border-bottom-left-radius:3px;box-shadow:inset -1px -1px 0 #8a867e"></div>
<div class="a" style="left:322px;top:586px;width:632px;height:1px;background:#000"></div>
<div class="a" style="left:449px;top:586px;width:85px;height:1px;background:#d4d0c8"></div>
<div class="t" style="left:334px;top:588px;color:#8c8a86;text-shadow:1px 1px 0 #fff">Pa<span class="u">r</span>ts</div>
<div class="t" style="left:389px;top:588px"><span class="u">C</span>allees</div>
<div class="t" style="left:459px;top:589px;letter-spacing:0.33px">Call Graph</div>
<div class="t" style="left:547px;top:588px;letter-spacing:0.17px"><span class="u">A</span>ll Callees</div>
<div class="t" style="left:634px;top:588px;letter-spacing:0.3px">Caller Map</div>
<div class="t" style="left:722px;top:588px"><span class="u">M</span>achine Code</div>

<!-- ===== STATUS BAR ===== -->
<div class="hl" style="left:1px;top:615px;width:958px;background:#6e6a64"></div>
<div class="vl" style="left:1px;top:616px;height:15px;background:#8a867e"></div>
<div class="hl" style="left:1px;top:630px;width:958px;background:#fff"></div>
<div class="a" style="left:1px;top:631px;width:958px;height:4px;background:#eeece8"></div>
<div class="t" style="left:2px;top:616px">xtmemory.kcg.6274 [1] - Total currently allocated Bytes Cost: 528</div>

<svg class="a" style="left:765px;top:10px" width="18" height="24" viewBox="0 0 18 24">
 <path d="M2 2 V20.5 L6.2 16.5 L9.2 22.5 L11.6 21.3 L8.8 15.5 L14.5 15.5 Z" fill="#111" stroke="#fff" stroke-width="1.3" stroke-linejoin="round"/>
</svg>
</body></html>
